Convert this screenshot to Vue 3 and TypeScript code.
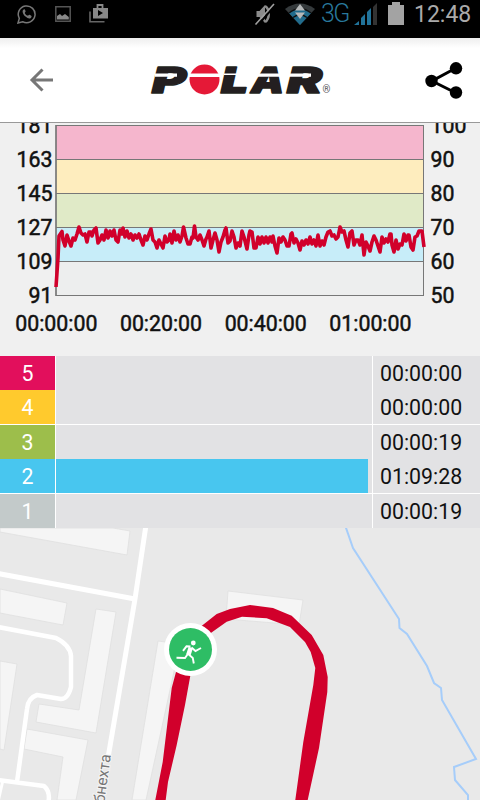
<template>
  <div class="screen">
    <div class="status-bar">
      <div class="notifications">
        <svg width="20" height="20" viewBox="0 0 20 20">
          <path d="M1 19l1.3-4.6A8.4 8.4 0 1 1 5.6 17.700z" fill="none" stroke="#777" stroke-width="1.500" />
          <path d="M7 5.200c-3 1.600-.5 5.600 1.500 7.400 2.400 2 4.700 3 6 .4.500-1-.6-1.500-2-2.200-1-.3-1 1.300-2 .8C9 11 8.200 10 7.800 8.900c.3-.7 1.100-1 .7-1.800C8 5.500 7.700 4.900 7 5.200z" fill="#777" />
        </svg>
        <svg width="16" height="16" viewBox="0 0 16 16">
          <path d="M.8.8h14.400v14.400H.8z" fill="none" stroke="#555" stroke-width="1.500" />
          <path d="M2 13.500V10l3-2 2 2 3-2 3.800 3v2.500z" fill="#888" />
        </svg>
        <svg width="20" height="19" viewBox="0 0 20 19">
          <path d="M1 7.500V17.700h14.500" fill="none" stroke="#666" stroke-width="1.600" />
          <path d="M8.500 4V1h5v3" fill="none" stroke="#888" stroke-width="1.800" />
          <path d="M4 4h15v10.500H4zM9 6v6l5-3z" fill="#888" fill-rule="evenodd" />
        </svg>
      </div>
      <div class="system">
        <svg class="mute" width="22" height="24" viewBox="0 0 22 24">
          <path d="M2.500 9h3L11 3v18l-5.500-6h-3z" fill="#8b8b8b" />
          <path d="M11 4c5 3 5 13 0 16" fill="none" stroke="#8b8b8b" stroke-width="2.500" />
          <path d="M3.500 23.500L21 3.500" stroke="#000" stroke-width="2" />
          <path d="M1.500 22.500L20 2" stroke="#a0a0a0" stroke-width="1.600" />
        </svg>
        <svg class="wifi" width="30" height="22" viewBox="0 0 30 22">
          <path d="M0 6Q15-5 30 6L15 22z" fill="#353a3c" />
          <path d="M3.800 10Q15 1.500 26.200 10L15 22z" fill="#216c8d" />
          <path d="M4 10Q15 1.500 26 10M8 14.500Q15 9 22 14.500" fill="none" stroke="#111" stroke-width="1.500" />
          <path d="M15 1l5 6.500H10zM15 16l5-6.500H10z" fill="#b5b8b9" />
        </svg>
        <span class="network">3G</span>
        <svg class="signal" width="24" height="22" viewBox="0 0 24 22">
          <path d="M0 22l5-4v4zM7 22v-7l4-4v11zM13 22V9l4-4v17z" fill="#21739a" />
          <path d="M19 22V4l4-4v22z" fill="#333" />
        </svg>
        <svg class="battery" width="16" height="23" viewBox="0 0 16 23">
          <path d="M4 0h8v3h4v20H0V3h4z" fill="#a3a3a3" />
        </svg>
        <span class="clock">12:48</span>
      </div>
    </div>

    <header class="app-bar">
      <svg class="back" width="26" height="24" viewBox="0 0 26 24">
        <path d="M13.500 1.500L3 12l10.500 10.500M3 12h21" fill="none" stroke="#777" stroke-width="3" />
      </svg>
      <svg class="logo" width="182" height="34" viewBox="0 0 182 34">
        <g class="wordmark">
          <text x="2" y="29.500" textLength="34" lengthAdjust="spacingAndGlyphs">P</text>
          <text x="71" y="29.500" textLength="27" lengthAdjust="spacingAndGlyphs">L</text>
          <text x="101" y="29.500" textLength="33" lengthAdjust="spacingAndGlyphs">A</text>
          <text x="137" y="29.500" textLength="35" lengthAdjust="spacingAndGlyphs">R</text>
        </g>
        <circle cx="54.500" cy="16.500" r="15" fill="#e51937" />
        <path d="M5 10.500h22v3.300H5zM39 10.500h32v3.500H39zM74 10.500h14v1.500H74zM106 10.500h25v3.300h-25zM138 10.500h23v3.300h-23z" fill="#fff" />
        <text class="mark" x="172.500" y="30">®</text>
      </svg>
      <svg class="share" width="38" height="37" viewBox="0 0 38 37">
        <path d="M31 6L7 19l24 12" fill="none" stroke="#000" stroke-width="3" />
        <circle cx="31" cy="6.300" r="6.200" />
        <circle cx="6.500" cy="19" r="6.200" />
        <circle cx="31" cy="30.500" r="6.200" />
      </svg>
    </header>

    <section class="chart">
      <svg width="480" height="233" viewBox="0 123 480 233">
        <rect v-for="band in bands" :key="band.y" x="56" :y="band.y" width="368" height="34" :fill="band.fill" />
        <path d="M56 125.500H424M56 159.500H424M56 193.500H424M56 227.500H424M56 261.500H424M56 295.500H424M423.500 125V296" stroke="#777" fill="none" />
        <path d="M56 125V296" stroke="#777" stroke-width="1.700" />
        <polyline :points="heartRate" class="heart-rate" />
        <g class="labels">
          <text v-for="(bpm, i) in bpmLabels" :key="bpm" x="52.500" :y="132.900 + i * 34" text-anchor="end">{{ bpm }}</text>
          <text v-for="(pct, i) in percentLabels" :key="pct" x="430.500" :y="132.900 + i * 34">{{ pct }}</text>
          <text v-for="(time, i) in timeLabels" :key="time" :x="56.300 + i * 104.700" y="331" text-anchor="middle">{{ time }}</text>
        </g>
      </svg>
    </section>

    <section class="zones">
      <div v-for="zone in zones" :key="zone.level" class="zone" :class="{ divided: zone.level % 2 === 0 }">
        <div class="level" :class="'level-' + zone.level">{{ zone.level }}</div>
        <div class="track">
          <div class="bar" :style="{ width: zone.share + '%' }"></div>
        </div>
        <div class="time">{{ zone.time }}</div>
      </div>
    </section>

    <section class="map">
      <svg width="480" height="272" viewBox="0 528 480 272">
        <g class="buildings">
          <path d="M0 528H113L130 531l-3 24L0 532z" />
          <path d="M0 589l67 14-4 22-63-12z" />
          <path d="M96 609l20 3-20 121-60-11 3-18 40 6z" />
          <path d="M0 661l17 3-13 86-4-1z" />
          <path d="M27 729l61 11-12 60H57l6-43-39-8z" />
          <path d="M158 641l22 3-34 156h-14z" />
          <path d="M228 591l75 9-4 25-73-6z" />
        </g>
        <g class="roads">
          <path d="M146 525L135 599 108 758" stroke-width="5" />
          <path d="M-2 573.500L135 599" stroke-width="5" />
          <path d="M-2 627l58 11q14 7 15 18v31q-3 12-10 12l-24-4q-9 3-10 14l-10 73M-2 780l46 6q7 6 4 18" stroke-width="4.500" />
          <path d="M3 780l-5 22" stroke-width="3" />
        </g>
        <text class="street" text-anchor="end" transform="translate(111 755) rotate(-82)">бнехта</text>
        <polyline class="river" points="345,525 353,548 399,619 399.500,628 407,634 427,666 434,683 441,688 442,700 476,759 454,767 455,780 468,795 468,802" />
        <path class="route" d="M176 672L171.700 688 162.700 762 155.300 800H165.700L168 782 176.700 745 185 705 191 672z" />
        <path class="route" d="M199 628L216.700 614 230 609 250 605 273 608 291.700 615.700 311.700 635 323.300 655 327.700 677 327.300 692 319 748 307.700 800H295.300L303.300 742 313.300 685 315.300 668 310.700 652 305 642 290 627 266.700 618.300 242 616.700 226.700 621.700 208 635z" />
        <circle cx="190.500" cy="649.500" r="26.500" fill="#fff" />
        <circle cx="190.500" cy="649.500" r="21.500" fill="#2ebd65" />
        <g class="runner">
          <circle cx="193.300" cy="643" r="2.400" fill="#fff" stroke="none" />
          <path d="M190.800 647.500L188.300 655" stroke-width="4.500" />
          <path d="M190.500 646.500l-4-.2-3.500 4.500M191.500 647.500l4 3.500 5.500-3M187.800 654l-2.800 4-8.500-.2M188.800 654.500l4 3.500 1 5.500" stroke-width="1.900" />
        </g>
      </svg>
    </section>
  </div>
</template>

<script setup lang="ts">
interface Zone {
  level: number
  time: string
  share: number
}

const zones: Zone[] = [
  { level: 5, time: '00:00:00', share: 0 },
  { level: 4, time: '00:00:00', share: 0 },
  { level: 3, time: '00:00:19', share: 0 },
  { level: 2, time: '01:09:28', share: 98.7 },
  { level: 1, time: '00:00:19', share: 0 },
]

const bands = [
  { y: 125, fill: '#f5b6cd' },
  { y: 159, fill: '#feedbe' },
  { y: 193, fill: '#e0eac7' },
  { y: 227, fill: '#c7edf9' },
  { y: 261, fill: '#edeeee' },
]

const bpmLabels = [181, 163, 145, 127, 109, 91]
const percentLabels = [100, 90, 80, 70, 60, 50]
const timeLabels = ['00:00:00', '00:20:00', '00:40:00', '01:00:00']

const heartRate = `
  56,287 58,258 59,236 61,233 62,231.5 63,240 65,246 67,235 69,241 71,246 73,238 75,240 77,234
  79,227 81,233 83,235 85,234 87,242 89,232 91,232 92,236 94,230 96,228 98,243 100,240 102,235
  104,240 106,230 108,238 110,231 112,236 114,230 116,240 118,242 120,230 122,234 123,228 125,237
  127,231 129,238 131,234 133,240 135,235 137,238 139,234 141,240 143,245 145,236 147,240 149,234
  151,229 153,240 155,242 157,248 159,240 161,244 163,248 165,236 167,242 169,240 170,234 172,243
  174,231 176,240 178,235 180,242 182,236 183.5,227 186,238 188,244 190,244 192,237 193,238 194.500,226
  196,237 198,240 200,235 202,240 204,246 206,239 207,237 209,231 211,248 213,240 215,233 217,240
  219,252 221,242 223,237 225,230 226,228 228,243 230,241 232,231 234,237 236,248 238,243 240,246
  242,231 244,237 247,249 249,235 250,231 252,232 254,248 256,248 258,237 260,244 262,237 264,243
  266,237 268,243 270,237 272,242 273,236 275,246 277,253 279,238 281,242 283,237 285,240 287,246
  289,246 291,234 292,233 294,243 296,239 298,243 300,250 302,241 304,245 306,240 308,244 310,237
  312,244 314,240 316,246 318,235 320,246 322,241 324,245 326,237 328,232 330,231 332,236 334,235
  336,239 338,237 340,227 342,232 344,231 346,240 348,247 350,233 352,231 354,245 356,240 358,240
  360,245 362,235 364,255 366,242 368,246 370,251 372,242 374,236 376,240 378,246 380,252 382,237
  384,243 386,239 388,242 390,234 391,234 392,245 394,252 396,240 398,249 400,244 402,245 404,234
  406,241 408,235 409,235 411,247 413,250 415,237 417,236 419,231 422,231 424,247
`
</script>

<style>
body {
  background: #efefef;
}
</style>

<style scoped>
.screen {
  display: flex;
  flex-direction: column;
  width: 480px;
  height: 800px;
  overflow: hidden;
  background: #f0f0f0;
  font-family: Roboto, sans-serif;
}

svg {
  display: block;
  flex-shrink: 0;
}

.status-bar {
  display: flex;
  justify-content: space-between;
  box-sizing: border-box;
  flex: 0 0 38px;
  padding: 0 9px 0 17px;
  background: #000;
}

.notifications {
  display: flex;
  gap: 18px;
  height: 27px;
  align-items: center;
}

.system {
  display: flex;
  align-items: center;
  height: 27px;
}

.wifi {
  margin-left: 9px;
}

.network {
  width: 29px;
  margin-left: 6px;
  color: #28789c;
  font-size: 25px;
  font-weight: 300;
  letter-spacing: -1.5px;
}

.signal {
  margin: 0 10px 0 4px;
}

.clock {
  width: 57px;
  margin-left: 10px;
  padding-top: 3px;
  color: #aaa;
  font-size: 23px;
  line-height: 30px;
}

.app-bar {
  display: flex;
  align-items: center;
  box-sizing: border-box;
  flex: 0 0 85px;
  padding: 0 17px 0 29px;
  border-bottom: 1px solid #999;
  background: linear-gradient(#eee, #fff 10px);
}

.logo {
  margin: -1px 0 0 95px;
  overflow: visible;
}

.wordmark {
  font-family: Inter, Roboto, sans-serif;
  font-size: 35px;
  font-weight: 900;
  font-style: italic;
  fill: #231f20;
  stroke: #231f20;
  stroke-width: 1.5;
  stroke-linejoin: round;
}

.mark {
  fill: #555;
  font-size: 10px;
}

.share {
  margin-left: auto;
}

.chart {
  flex: 0 0 233px;
  overflow: hidden;
}

.labels {
  font-size: 21.3px;
  fill: #111;
  stroke: #111;
  stroke-width: 0.5;
}

.heart-rate {
  fill: none;
  stroke: #d1002b;
  stroke-width: 3.6;
  stroke-linejoin: round;
}

.zones {
  flex: 0 0 172px;
}

.zone {
  display: flex;
  height: 34px;
  background: #e2e2e4;
  font-size: 21.3px;
  line-height: 35px;
}

.divided {
  border-bottom: 1px solid #fff;
}

.level {
  width: 55px;
  border-right: 1px solid #fff;
  color: #fff;
  text-align: center;
}

.level-5 {
  background: #e20f5c;
}

.level-4 {
  background: #ffca2d;
}

.level-3 {
  background: #9dbe4b;
}

.level-2 {
  background: #48c6ef;
}

.level-1 {
  background: #c3caca;
}

.track {
  width: 316px;
  border-right: 1px solid #fff;
}

.bar {
  height: 100%;
  background: #48c6ef;
}

.time {
  padding-left: 7px;
  color: #111;
}

.map {
  flex: 1;
  background: #e9e9e9;
}

.buildings {
  fill: #f5f5f5;
  stroke: #e0e0e0;
  stroke-width: 0.8;
}

.roads {
  fill: none;
  stroke: #fff;
  stroke-linejoin: round;
}

.street {
  fill: #777;
  stroke: #f5f5f5;
  stroke-width: 2;
  paint-order: stroke;
  font-size: 15.5px;
}

.river {
  fill: none;
  stroke: #a6cdfa;
  stroke-width: 2;
}

.route {
  fill: #d1002b;
}

.runner {
  fill: none;
  stroke: #fff;
}
</style>
